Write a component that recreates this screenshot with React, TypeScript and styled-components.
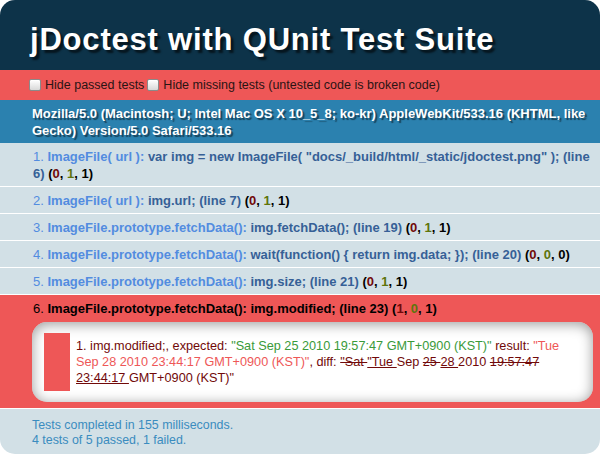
import React from 'react';
import styled, { createGlobalStyle } from 'styled-components';

const GlobalStyle = createGlobalStyle`
  html, body { margin: 0; padding: 0; background: #ffffff; }
  body { font-family: "Liberation Sans", Helvetica, Arial, sans-serif; }
`;

const Suite = styled.div`
  width: 600px;
  height: 454px;
  border-radius: 15px;
  overflow: hidden;
  display: flex;
  flex-direction: column;
  font-family: "Liberation Sans", Helvetica, Arial, sans-serif;
`;

const Header = styled.h1`
  margin: 0;
  height: 70px;
  box-sizing: border-box;
  padding: 24px 0 0 30px;
  background: #0d3349;
  color: #ffffff;
  font-size: 31px;
  line-height: 31px;
  letter-spacing: 0.8px;
  font-weight: bold;
  text-shadow: rgba(0, 0, 0, 0.6) 3px 3px 2px;
  white-space: nowrap;
`;

const Toolbar = styled.div`
  height: 30px;
  box-sizing: border-box;
  padding-left: 29px;
  display: flex;
  align-items: center;
  gap: 3px;
  background: #ee5757;
  color: #2a1414;
  font-size: 12.5px;
`;

const Label = styled.label`
  display: flex;
  align-items: center;
  gap: 4px;
`;

const Check = styled.input.attrs({ type: 'checkbox' })`
  appearance: none;
  margin: 0;
  width: 12px;
  height: 12px;
  box-sizing: border-box;
  border: 1px solid #8a8a8a;
  border-radius: 2px;
  background: linear-gradient(#ffffff, #d8d8d8);
  box-shadow: inset 0 1px 0 #fff;
`;

const UserAgent = styled.div`
  padding: 5px 10px 4px 32px;
  background: #2b81af;
  color: #ffffff;
  font-size: 13px;
  line-height: 17px;
  font-weight: bold;
  text-shadow: rgba(0, 0, 0, 0.5) 2px 2px 1px;
`;

const Tests = styled.ol`
  list-style: none;
  margin: 0;
  padding: 0;
`;

const Row = styled.li<{ $fail?: boolean }>`
  padding: 5px 7px ${(p) => (p.$fail ? '5px' : '4px')} 33px;
  border-bottom: 1px solid #ffffff;
  background: ${(p) => (p.$fail ? '#ee5757' : '#d2e0e6')};
  color: ${(p) => (p.$fail ? '#000000' : '#528ce0')};
  font-size: 13px;
  line-height: 17px;
`;

const Num = styled.span``;

const Module = styled.b<{ $fail?: boolean }>`
  color: ${(p) => (p.$fail ? '#000000' : '#528ce0')};
`;

const Name = styled.b<{ $fail?: boolean }>`
  color: ${(p) => (p.$fail ? '#000000' : '#366097')};
`;

const Counts = styled.b`
  color: #000000;
`;

const Count = styled.span<{ $kind: 'failed' | 'passed' | 'total' }>`
  color: ${(p) => (p.$kind === 'failed' ? '#710909' : p.$kind === 'passed' ? '#5e740b' : '#000000')};
`;

const AssertBox = styled.ul`
  list-style: none;
  margin: 5px 0 1px -1px;
  padding: 5px 6px;
  background: #ffffff;
  border-radius: 15px;
  box-shadow: inset 0 2px 13px #999999;
`;

const Assert = styled.li`
  margin: 6px;
  padding: 5px 6px;
  border-left: 26px solid #ee5757;
  color: #710909;
  font-size: 12.7px;
  line-height: 16px;
  font-weight: normal;
`;

const Expected = styled.span`
  color: #3a9a3a;
`;

const Actual = styled.span`
  color: #ee5757;
`;

const Del = styled.del`
  color: #710909;
  text-decoration: line-through;
`;

const Ins = styled.ins`
  color: #710909;
  text-decoration: underline;
`;

const Result = styled.div`
  flex: 1;
  padding: 9px 10px 0 32px;
  background: #d2e0e6;
  color: #3a8cbf;
  font-size: 12.4px;
  line-height: 15px;
`;

type Test = {
  module: string;
  name: string;
  counts: [number, number, number];
  fail?: boolean;
};

const tests: Test[] = [
  {
    module: 'ImageFile( url ):',
    name: 'var img = new ImageFile( "docs/_build/html/_static/jdoctest.png" ); (line 6)',
    counts: [0, 1, 1],
  },
  { module: 'ImageFile( url ):', name: 'img.url; (line 7)', counts: [0, 1, 1] },
  {
    module: 'ImageFile.prototype.fetchData():',
    name: 'img.fetchData(); (line 19)',
    counts: [0, 1, 1],
  },
  {
    module: 'ImageFile.prototype.fetchData():',
    name: 'wait(function() { return img.data; }); (line 20)',
    counts: [0, 0, 0],
  },
  {
    module: 'ImageFile.prototype.fetchData():',
    name: 'img.size; (line 21)',
    counts: [0, 1, 1],
  },
  {
    module: 'ImageFile.prototype.fetchData():',
    name: 'img.modified; (line 23)',
    counts: [1, 0, 1],
    fail: true,
  },
];

export default function App() {
  return (
    <>
      <GlobalStyle />
      <Suite>
        <Header>jDoctest with QUnit Test Suite</Header>
        <Toolbar>
          <Label>
            <Check />
            Hide passed tests
          </Label>
          <Label>
            <Check />
            Hide missing tests (untested code is broken code)
          </Label>
        </Toolbar>
        <UserAgent>
          Mozilla/5.0 (Macintosh; U; Intel Mac OS X 10_5_8; ko-kr) AppleWebKit/533.16 (KHTML, like
          Gecko) Version/5.0 Safari/533.16
        </UserAgent>
        <Tests>
          {tests.map((t, i) => (
            <Row key={i} $fail={t.fail}>
              <Num>{i + 1}. </Num>
              <Module $fail={t.fail}>{t.module}</Module> <Name $fail={t.fail}>{t.name}</Name>{' '}
              <Counts>
                (<Count $kind="failed">{t.counts[0]}</Count>, <Count $kind="passed">{t.counts[1]}</Count>,{' '}
                <Count $kind="total">{t.counts[2]}</Count>)
              </Counts>
              {t.fail && (
                <AssertBox>
                  <Assert>
                    1. img.modified;, expected:{' '}
                    <Expected>"Sat Sep 25 2010 19:57:47 GMT+0900 (KST)"</Expected> result:{' '}
                    <Actual>"Tue Sep 28 2010 23:44:17 GMT+0900 (KST)"</Actual>, diff:{' '}
                    <Del>"Sat </Del>
                    <Ins>"Tue </Ins>Sep <Del>25 </Del>
                    <Ins>28 </Ins>2010 <Del>19:57:47 </Del>
                    <Ins>23:44:17 </Ins>GMT+0900 (KST)"
                  </Assert>
                </AssertBox>
              )}
            </Row>
          ))}
        </Tests>
        <Result>
          Tests completed in 155 milliseconds.
          <br />4 tests of 5 passed, 1 failed.
        </Result>
      </Suite>
    </>
  );
}
